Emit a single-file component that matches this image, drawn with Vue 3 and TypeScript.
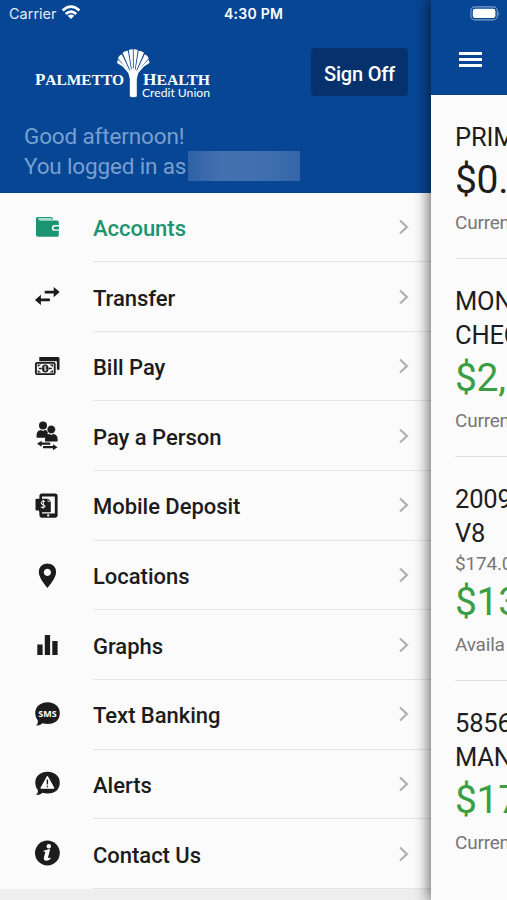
<script setup lang="ts">
interface MenuItem {
  label: string
  icon: string
  active?: boolean
}

interface Account {
  name: string[]
  note?: string
  amount: string
  caption: string
  neutral?: boolean
}

const menu: MenuItem[] = [
  { label: 'Accounts', icon: 'wallet', active: true },
  { label: 'Transfer', icon: 'transfer' },
  { label: 'Bill Pay', icon: 'bill' },
  { label: 'Pay a Person', icon: 'person' },
  { label: 'Mobile Deposit', icon: 'deposit' },
  { label: 'Locations', icon: 'pin' },
  { label: 'Graphs', icon: 'graph' },
  { label: 'Text Banking', icon: 'sms' },
  { label: 'Alerts', icon: 'alert' },
  { label: 'Contact Us', icon: 'info' },
]

const accounts: Account[] = [
  { name: ['PRIM'], amount: '$0.', caption: 'Curren', neutral: true },
  { name: ['MON', 'CHEC'], amount: '$2,', caption: 'Curren' },
  { name: ['2009', 'V8'], note: '$174.0', amount: '$13', caption: 'Availa' },
  { name: ['5856', 'MAN'], amount: '$17', caption: 'Curren' },
]
</script>

<template>
  <div class="screen">
    <aside class="drawer">
      <header class="head">
        <div class="status">
          <span class="carrier">Carrier</span>
          <svg class="wifi" width="20" height="15" viewBox="0 0 20 15">
            <g fill="none" stroke="#fff" stroke-width="2.7">
              <path d="M1.6 5.6Q10-2.2 18.4 5.6" />
              <path d="M4.7 9Q10 4.2 15.3 9" />
            </g>
            <path d="M10 14 6.7 10.8Q10 8 13.3 10.8Z" fill="#fff" />
          </svg>
          <span class="time">4:30 PM</span>
        </div>
        <div class="brand">
          <svg class="logo" width="184" height="54" viewBox="0 0 184 54" fill="#fff">
            <text class="serif" x="4" y="39" textLength="89" lengthAdjust="spacingAndGlyphs"><tspan font-size="17">P</tspan>ALMETTO</text>
            <text class="serif" x="112" y="39" textLength="67" lengthAdjust="spacingAndGlyphs"><tspan font-size="17">H</tspan>EALTH</text>
            <text class="sub" x="111" y="51.3" textLength="68" lengthAdjust="spacingAndGlyphs">Credit Union</text>
            <path d="M101.9 25 101.9 3.2Q99.8 3 97.8 3.9L101 25Z" />
            <path d="M102.7 25 102.7 3.2Q104.8 3 106.8 3.9L103.6 25Z" />
            <path d="M100.3 25 96.9 4.7Q94 4.8 91.6 6.8L99.5 25Z" />
            <path d="M104.3 25 107.7 4.7Q110.6 4.8 113 6.8L105.1 25Z" />
            <path d="M99 25.5 90.8 8.2Q88 9.2 86.9 12.2L98.2 25.5Z" />
            <path d="M105.6 25.5 113.8 8.2Q116.6 9.2 117.7 12.2L106.4 25.5Z" />
            <path d="M86.9 13.5 98.5 25 102.3 22 106.1 25 117.7 13.5 118.6 17 113 20.5 107.3 27 105.8 33V50.6Q102.3 52 98.8 50.6V33L97.3 27 91.6 20.5 86 17Z" />
          </svg>
          <button class="signoff" type="button">Sign Off</button>
        </div>
        <div class="greeting">
          <p>Good afternoon!</p>
          <p>You logged in as<span class="masked"></span></p>
        </div>
      </header>

      <nav class="menu">
        <a v-for="item in menu" :key="item.label" class="item" :class="{ active: item.active }">
          <svg class="icon" width="28" height="30" viewBox="0 0 28 30" fill="currentColor">
            <g v-if="item.icon === 'wallet'">
              <path d="M4.5 4H18q2 0 2 2.5H6.3v1H24q1.8 0 1.8 1.8V12h-4q-3 0-3 2.9t3 2.9h4v4.1q0 1.9-1.8 1.9H5q-2 0-2-2V5.5Q3 4 4.5 4Z" />
              <path d="M22 13.4h4v3h-4q-1.5 0-1.5-1.5t1.5-1.5Z" />
              <path d="M5 5.8H18.5" stroke="#fbfbfb" stroke-width="1" />
            </g>
            <g v-else-if="item.icon === 'transfer'">
              <path d="M11.7 8.8h9V5l6 5.1-6 5.1v-3.6h-9ZM16.9 16.5h-9v-3.8l-6 5.2 6 5.1v-3.7h9Z" />
            </g>
            <g v-else-if="item.icon === 'bill'">
              <path d="M6.3 5H25q1.5 0 1.5 1.5v11.2h-2.6V9.2H6.3Z" />
              <rect x="2.9" y="10.9" width="18.8" height="11.2" rx="1.2" fill="none" stroke="currentColor" stroke-width="1.9" />
              <path d="M4.7 12.6h3.4l-3.4 2.3ZM19.9 12.6v2.3l-3.4-2.3ZM4.7 20.4v-2.3l3.4 2.3ZM19.9 20.4h-3.4l3.4-2.3Z" />
              <ellipse cx="12.3" cy="16.5" rx="3.3" ry="3.9" />
              <path d="M5.8 16.5h3M15.8 16.5h3" stroke="currentColor" stroke-width="1.5" />
              <path d="M13.4 15q-2-1-2.2.3t1.2 1.2q1.4.4.8 1.3t-2 .1M12.3 13.7v5.6" fill="none" stroke="#fff" stroke-width=".7" />
            </g>
            <g v-else-if="item.icon === 'person'">
              <circle cx="10" cy="4.6" r="4" />
              <path d="M3.6 16.7v-3.2Q4 9.2 8 8.9l2 1.1 2-1.1q2 .1 3 1.5-.9 2.2.3 3.7-2.6 1-3.2 2.6Z" />
              <circle cx="18.3" cy="8.5" r="4.2" stroke="#fbfbfb" stroke-width=".6" />
              <path d="M12 20.6v-2.8q.3-4.2 4.2-4.8l2.1 1.1 2.1-1.1q4 .6 4.2 4.8v2.8Z" />
              <path d="M4 22.8 8.6 19.8v1.8h8.6v2.2H8.6v2ZM24.5 26.2l-4.5-3v1.9H10v2.2h10v1.9Z" />
            </g>
            <g v-else-if="item.icon === 'deposit'">
              <path fill-rule="evenodd" d="M9 2.5h13q2.6 0 2.6 2.6v19q0 2.6-2.6 2.6H9q-2.6 0-2.6-2.6v-19Q6.4 2.5 9 2.5ZM9 5.5v17h12.8v-17Z" />
              <path d="M3.5 7.8h11.7l2.6 2.6v10.8H6.2v-1.7H3.5q-1 0-1-1V8.8q0-1 1-1Z" />
              <path d="M15 7.8v2.8h2.8" stroke="#fff" stroke-width=".6" fill="none" />
              <path d="M12.1 10.5q-3.7-1.3-3.9.9t2 2.2q2.5.8 1.8 2.2t-4.2.4M10.2 8.8v8.8" fill="none" stroke="#fff" stroke-width="1" />
              <circle cx="15.2" cy="24.4" r="1.1" fill="#fff" />
            </g>
            <path v-else-if="item.icon === 'pin'" fill-rule="evenodd" d="M14.4 2.4q8.7.5 8.7 9 0 5.2-8.7 15.6Q5.8 16.6 5.8 11.4q0-8.5 8.6-9Zm0 5.4a3.6 3.6 0 1 0 .01 0Z" />
            <path v-else-if="item.icon === 'graph'" d="M4.3 14.5h5.3V25H4.3ZM11.8 5.1h5.3V25h-5.3ZM19.3 11.1h5.3V25h-5.3Z" />
            <g v-else-if="item.icon === 'sms'">
              <path d="M14.5 2.2q12 .8 12.3 11-.3 10.3-12.3 10.9-2.5 0-5-.8-2.3 2.4-6.5 2.2 2-1.6 2-4.5-2.8-3.4-2.8-7.8Q2.5 3 14.5 2.2Z" />
              <text x="5.3" y="17" class="sms" textLength="18.4" lengthAdjust="spacingAndGlyphs">SMS</text>
            </g>
            <g v-else-if="item.icon === 'alert'">
              <path d="M14.5 1.7q12 .8 12.3 11-.3 10.3-12.3 10.9-2.5 0-5-.8-2.3 2.4-6.5 2.2 2-1.6 2-4.5-2.8-3.4-2.8-7.8Q2.5 2.5 14.5 1.7Z" />
              <path d="M14.4 6.2 21 18.2H7.8Z" fill="#fff" stroke="#fff" stroke-width="1" stroke-linejoin="round" />
              <path d="M14.4 9.5v5M14.4 15.7v1.6" stroke="currentColor" stroke-width="1.4" />
            </g>
            <g v-else>
              <circle cx="14.4" cy="14" r="12.4" />
              <circle cx="15.8" cy="7.2" r="2.2" fill="#fff" />
              <path d="M10.8 11.5q3-.3 4.5-1.3h1.9l-2.2 8.4q-.2 1.2 2.2-.2l.7 1q-2.5 2.6-5.2 2.3-2.5-.6-1.7-3.4l1.3-5q.2-.9-1.7-.6Z" fill="#fff" />
            </g>
          </svg>
          <span class="row">
            <span class="label">{{ item.label }}</span>
            <svg class="chevron" width="12" height="16" viewBox="0 0 12 16">
              <path d="M2 1.5 8.9 8 2 14.5" fill="none" stroke="#b0b0b0" stroke-width="2.2" />
            </svg>
          </span>
        </a>
      </nav>
    </aside>

    <main class="page">
      <header class="bar">
        <div class="battery-row">
          <svg width="31" height="15" viewBox="0 0 31 15">
            <rect x=".9" y=".9" width="26.4" height="13" rx="4" fill="none" stroke="#7f9fca" stroke-width="1.1" />
            <rect x="2.8" y="2.8" width="22.6" height="9.2" rx="2.2" fill="#fff" />
            <path d="M28.5 5.2q1.8 2.3 0 4.6Z" fill="#7f9fca" />
          </svg>
        </div>
        <div class="burger"><i></i><i></i><i></i></div>
      </header>
      <section v-for="account in accounts" :key="account.name[0]" class="account">
        <div v-for="line in account.name" :key="line" class="name">{{ line }}</div>
        <div v-if="account.note" class="note">{{ account.note }}</div>
        <div class="amount" :class="{ neutral: account.neutral }">{{ account.amount }}</div>
        <div class="caption">{{ account.caption }}</div>
      </section>
    </main>
  </div>
</template>

<style>
html,
body {
  margin: 0;
  overflow: hidden;
}
</style>

<style scoped>
.screen {
  display: flex;
  width: 507px;
  height: 900px;
  overflow: hidden;
  background: #eee;
  font-family: Roboto, sans-serif;
}

.drawer {
  width: 431px;
  flex: none;
}

.head {
  box-sizing: border-box;
  height: 192.5px;
  background: #074694;
  color: #fff;
}

.status {
  display: flex;
  align-items: center;
  height: 27px;
  padding-left: 9px;
  font-family: Inter, sans-serif;
  font-size: 14.5px;
}

.carrier {
  width: 47px;
  color: #e3ebf5;
}

.wifi {
  margin-left: 5px;
  margin-top: -2px;
}

.time {
  margin-left: 143px;
  font-weight: 600;
  font-size: 14px;
  letter-spacing: 0.25px;
  white-space: nowrap;
}

.brand {
  display: flex;
  justify-content: space-between;
  align-items: flex-start;
  padding: 18px 23px 0 31px;
}

.logo {
  margin-top: 1px;
}

.serif {
  font-family: 'Liberation Serif', serif;
  font-weight: 700;
  font-size: 15.5px;
}

.sub {
  font-family: Lato, sans-serif;
  font-size: 12px;
}

.signoff {
  width: 97px;
  height: 48px;
  margin-top: 3px;
  padding: 3px 0 0;
  border: 0;
  border-radius: 4px;
  background: #05326c;
  color: #fff;
  font: 500 20px Roboto, sans-serif;
  letter-spacing: -0.2px;
}

.greeting {
  padding: 21.5px 0 0 24px;
  font-size: 22.5px;
  line-height: 30px;
  letter-spacing: -0.15px;
  color: #78a0d0;
}

.greeting p {
  display: flex;
  align-items: center;
  height: 29.5px;
  margin: 0;
}

.masked {
  width: 112px;
  height: 30px;
  margin-left: 2px;
  background: linear-gradient(90deg, #2e61a6, #4471b0 30%, #3f6eae 75%, #3565a8);
}

.menu {
  background: #fbfbfb;
}

.item {
  display: flex;
  height: 69.65px;
  color: #1c1c1c;
}

.active {
  color: #1b9471;
}

.icon {
  margin: 20px 32px 0 33px;
  flex: none;
}

.row {
  display: flex;
  flex: 1;
  align-items: center;
  justify-content: space-between;
  box-sizing: border-box;
  padding: 3.2px 21px 0 0;
  border-bottom: 1px solid #e5e5e5;
}

.chevron {
  margin-top: -3px;
}

.label {
  font-size: 22px;
  font-weight: 500;
  letter-spacing: -0.03px;
}

.sms {
  font: 700 8.5px 'Open Sans', sans-serif;
  fill: #fff;
}

.page {
  position: relative;
  flex: 1;
  min-width: 0;
  background: #fbfbfb;
  box-shadow: -1px 0 14px 1px rgba(0, 0, 0, 0.6);
}

.bar {
  box-sizing: border-box;
  height: 95px;
  background: #074694;
}

.battery-row {
  padding: 6px 0 0 39px;
  height: 46px;
}

.battery-row svg {
  display: block;
}

.burger {
  display: flex;
  flex-direction: column;
  gap: 3px;
  width: 23px;
  margin-left: 28px;
}

.burger i {
  height: 3px;
  background: #fff;
}

.account {
  box-sizing: border-box;
  margin-left: 24px;
  padding: 25px 0 19px;
  border-bottom: 1px solid #e0e0e0;
  overflow: hidden;
  white-space: nowrap;
  color: #1d1d1d;
}

.account:last-child {
  border-bottom: 0;
}

.name {
  font-size: 25.5px;
  line-height: 34.5px;
  letter-spacing: -0.2px;
}

.note,
.caption {
  font-size: 19px;
  line-height: 33px;
  letter-spacing: -0.2px;
  color: #777;
}

.note {
  line-height: 26px;
}

.amount {
  font-size: 39px;
  line-height: 51px;
  letter-spacing: -0.3px;
  color: #3a9e45;
}

.neutral {
  color: #1d1d1d;
}
</style>
